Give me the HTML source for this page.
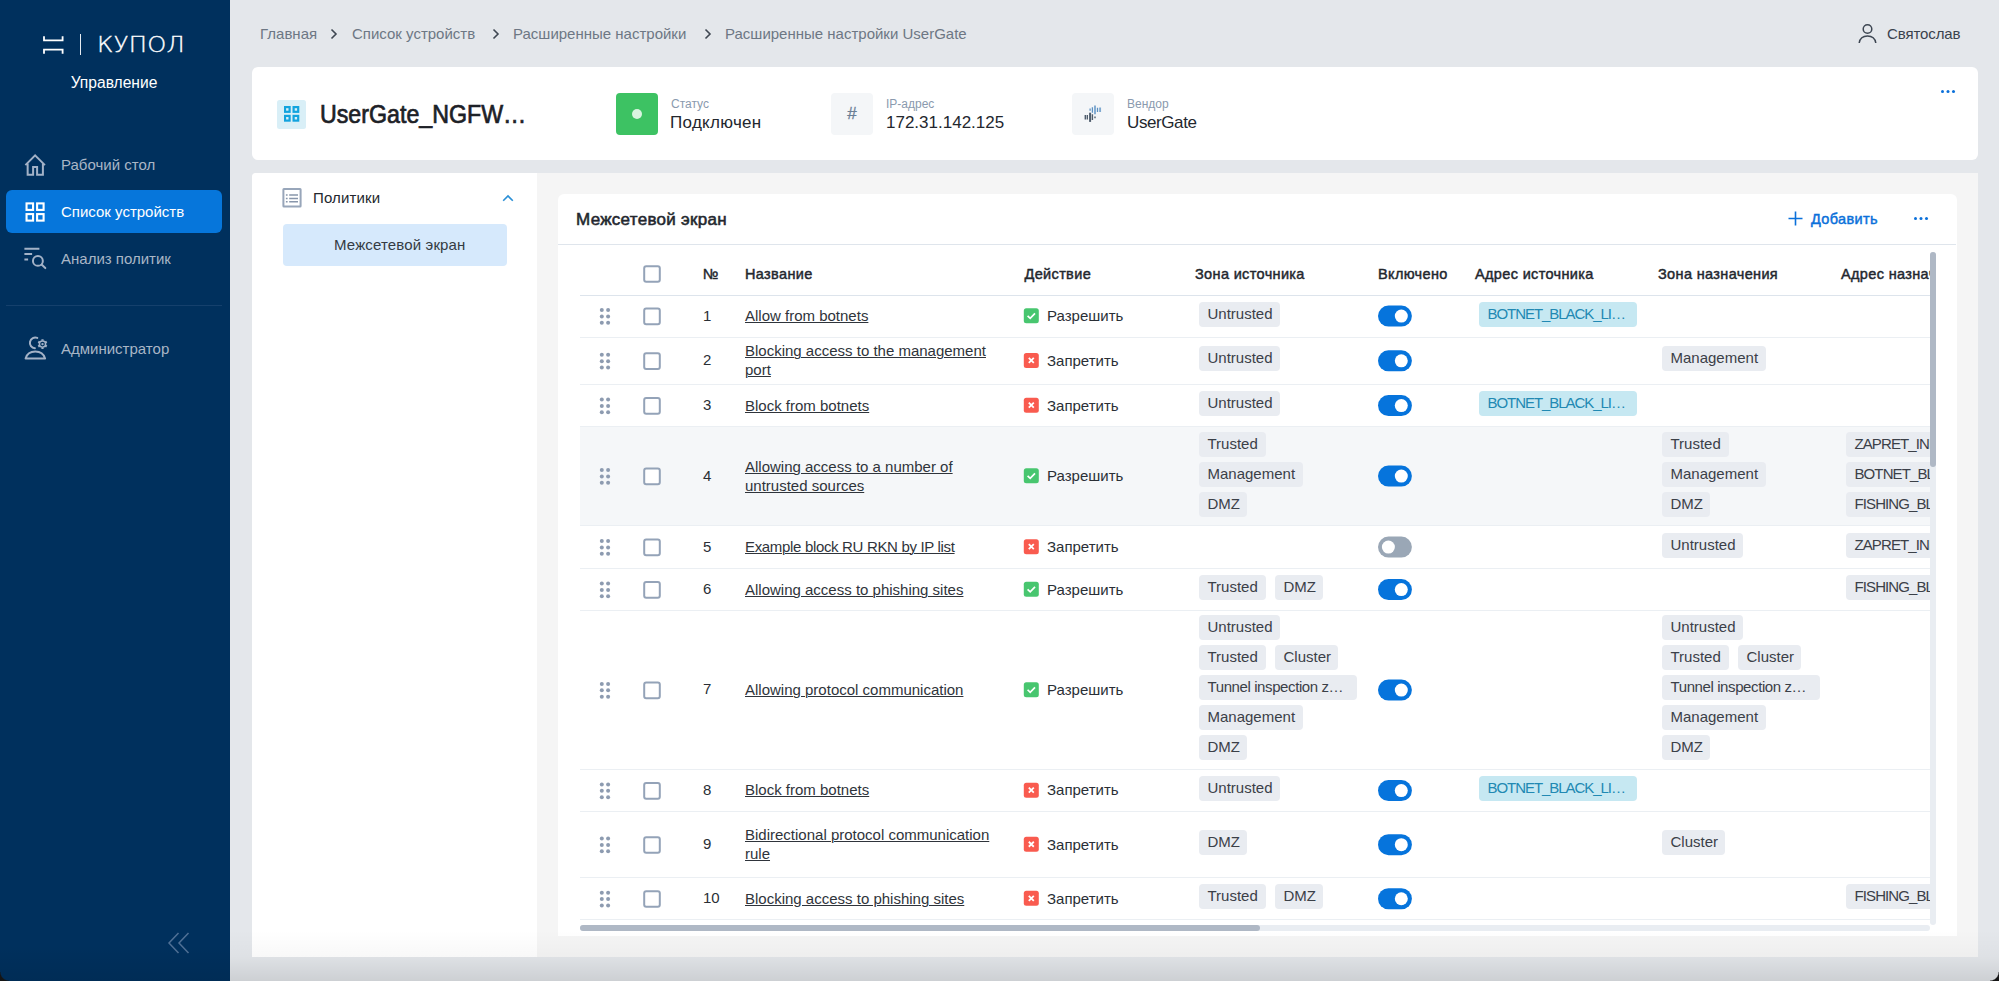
<!DOCTYPE html>
<html lang="ru">
<head>
<meta charset="utf-8">
<title>Купол — Расширенные настройки UserGate</title>
<style>
*{box-sizing:border-box;margin:0;padding:0}
html,body{width:1999px;height:981px;overflow:hidden}
body{position:relative;background:#e4e7eb;font-family:"Liberation Sans",sans-serif;font-size:15px;color:#2a2f36;line-height:1}
.abs{position:absolute}
.med{-webkit-text-stroke:0.35px currentColor}
/* sidebar */
#side{position:absolute;left:0;top:0;width:230px;height:981px;background:#00305d}
#side .nav{position:absolute;left:6px;width:216px;height:43px;border-radius:6px;color:#a9b6c6;font-size:15px}
#side .nav span{position:absolute;left:55px;top:14px;white-space:nowrap}
#side .nav.act{background:#0676db;color:#fff}
/* top */
.bc{position:absolute;top:26px;font-size:15px;color:#6d7784;white-space:nowrap}
.bcs{position:absolute;top:27.5px}
/* cards */
#hcard{position:absolute;left:252px;top:67px;width:1725.5px;height:92.5px;background:#fff;border-radius:6px}
#panel{position:absolute;left:252px;top:173px;width:1725.5px;height:784px;background:#f5f5f5;border-radius:4px 0 0 0}
#lpanel{position:absolute;left:0;top:0;width:285px;height:784px;background:#fff;border-radius:4px 0 0 0}
#tcard{position:absolute;left:558px;top:194px;width:1398.5px;height:742px;background:#fff;border-radius:6px 6px 0 0}
.lbl{position:absolute;font-size:12px;color:#8a9aae;margin-top:0.5px;white-space:nowrap}
.val{position:absolute;font-size:17px;color:#23272e;white-space:nowrap}
/* table */
.th{position:absolute;top:266.5px;font-size:14.5px;font-weight:400;-webkit-text-stroke:0.45px #23272e;letter-spacing:0.35px;color:#23272e;white-space:nowrap}
.row{position:absolute;left:580px;width:1350px;border-top:1px solid #e8ecf1}
.num{position:absolute;left:703px;font-size:15px;white-space:nowrap}
.nm{position:absolute;left:745px;font-size:15px;line-height:19px;text-decoration:underline;text-decoration-thickness:1px;text-underline-offset:1px;color:#2f343b;white-space:nowrap}
.actt{position:absolute;left:1047px;font-size:15px;white-space:nowrap}
.chip{position:absolute;height:25px;border-radius:4px;background:#e9ecf1;color:#3b4048;font-size:15px;line-height:24.5px;padding:0 8.5px;white-space:nowrap;overflow:hidden}
.chip.b{background:#c6e8f2;color:#2189b3}
</style>
</head>
<body>
<!--side--><div id="side">
<svg class="abs" style="left:43px;top:36px" width="21" height="18" viewBox="0 0 21 18" fill="none" stroke="#fff" stroke-width="1.800"><path d="M1 0.200v4.200h18.600V0.200M1 17.800v-4.200h18.600v4.200"/></svg>
<div class="abs" style="left:80px;top:34px;width:1.300px;height:21px;background:#e6ebf1"></div>
<div class="abs" id="logo" style="left:96.5px;top:31px;font-family:'DejaVu Sans Light','DejaVu Sans','Liberation Sans',sans-serif;font-weight:200;font-size:22px;line-height:28px;color:#fff;white-space:nowrap;letter-spacing:0.300px;transform:scaleX(1.10);transform-origin:0 0;-webkit-text-stroke:0.350px #fff">КУПОЛ</div>
<div class="abs" id="logo2" style="left:0;width:228px;top:73px;text-align:center;font-size:15.600px;line-height:20px;color:#fff;white-space:nowrap">Управление</div>
<div class="nav" style="top:143px"><span>Рабочий стол</span></div>
<svg class="abs" style="left:20px;top:150px" width="30" height="30" viewBox="0 0 30 30" fill="none" stroke="#a3b2c7" stroke-width="2"><path d="M5.400 15.100L15.100 5.400l9.800 9.700"/><path d="M7.650 13.500v11.200h5.450V17h4v7.700h5.800V13.500"/></svg>
<div class="nav act" style="top:190px"><span>Список устройств</span></div>
<svg class="abs" style="left:20px;top:197px" width="30" height="30" viewBox="0 0 30 30" fill="none" stroke="#fff" stroke-width="2.100"><rect x="6.550" y="6.400" width="6.500" height="6.500"/><rect x="17.100" y="6.400" width="6.500" height="6.500"/><rect x="6.550" y="17.100" width="6.500" height="6.500"/><rect x="17.100" y="17.100" width="6.500" height="6.500"/></svg>
<div class="nav" style="top:237px"><span>Анализ политик</span></div>
<svg class="abs" style="left:20px;top:243px" width="30" height="30" viewBox="0 0 30 30" fill="none" stroke="#a3b2c7" stroke-width="2"><path d="M4.400 5.800h15M4.400 11.100h7.700M4.400 16.400h3.700"/><circle cx="17.900" cy="17.900" r="4.950"/><path d="M21.600 21.600l3.700 3.500" stroke-linecap="round"/></svg>
<div class="abs" style="left:6px;top:305px;width:216px;height:1px;background:#15406c"></div>
<div class="nav" style="top:327px"><span>Администратор</span></div>
<svg class="abs" style="left:20px;top:334px" width="30" height="30" viewBox="0 0 30 30" fill="none" stroke="#a3b2c7" stroke-width="2"><path d="M17.300 3.900A5.400 5.400 0 1 0 14.900 14.300" stroke-linecap="round"/><path d="M5.600 24.600C7 19.600 10.800 17.600 15.300 17.600s8.300 2 9.800 7z" stroke-linejoin="round"/><circle cx="22.500" cy="10.100" r="3.100" stroke-width="1.500"/><circle cx="22.500" cy="10.100" r="1.200" fill="#a3b2c7" stroke="none"/><path d="M22.500 5.200v1.600M22.500 13.400v1.600M18.260 7.650l1.380.8M25.360 11.750l1.380.8M18.260 12.550l1.380-.8M25.360 8.450l1.380-.8" stroke-width="2.200"/></svg>
<svg class="abs" style="left:167px;top:932px" width="24" height="22" viewBox="0 0 24 22" fill="none" stroke="#4f7095" stroke-width="1.500"><path d="M11.500 1L2 11l9.500 10M21.500 1L12 11l9.500 10"/></svg>
</div>
<!--/side-->
<!--top--><div id="top">
<div class="bc" style="left:260px">Главная</div><svg class="bcs" style="left:330px" width="8" height="12" viewBox="0 0 8 12" fill="none" stroke="#3f4752" stroke-width="1.6"><path d="M1.5 1.5L6 6l-4.500 4.500"/></svg>
<div class="bc" style="left:352px">Список устройств</div><svg class="bcs" style="left:492px" width="8" height="12" viewBox="0 0 8 12" fill="none" stroke="#3f4752" stroke-width="1.6"><path d="M1.5 1.5L6 6l-4.500 4.500"/></svg>
<div class="bc" style="left:513px">Расширенные настройки</div><svg class="bcs" style="left:704px" width="8" height="12" viewBox="0 0 8 12" fill="none" stroke="#3f4752" stroke-width="1.6"><path d="M1.5 1.5L6 6l-4.500 4.500"/></svg>
<div class="bc" style="left:725px">Расширенные настройки UserGate</div>
<svg class="abs" style="left:1858px;top:23px" width="19" height="21" viewBox="0 0 19 21" fill="none" stroke="#3d4652" stroke-width="1.5"><circle cx="9.500" cy="6" r="4.300"/><path d="M1.200 20c.8-5 4-7 8.300-7s7.500 2 8.300 7"/></svg>
<div class="abs" style="left:1887px;top:26px;font-size:15px;color:#3a424d;white-space:nowrap;letter-spacing:-0.1px">Святослав</div>
</div><!--/top-->
<!--hcard--><div id="hcard">
<div class="abs" style="left:25px;top:32.5px;width:29px;height:29px;border-radius:2.5px;background:#d9eff7"></div>
<svg class="abs" style="left:32px;top:39px" width="17" height="17" viewBox="0 0 17 17" fill="none" stroke="#12a3de" stroke-width="2.200"><rect x="1" y="1.100" width="4.600" height="4.700"/><rect x="9.600" y="1.100" width="4.600" height="4.700"/><rect x="1" y="9.900" width="4.600" height="4.700"/><rect x="9.600" y="9.900" width="4.600" height="4.700"/></svg>
<div class="abs" id="ttl" style="left:68px;top:32px;font-size:25px;line-height:30px;font-weight:400;-webkit-text-stroke:0.7px #1d2127;color:#1d2127;white-space:nowrap;transform:scaleX(0.928);transform-origin:0 0">UserGate_NGFW…</div>
<div class="abs" style="left:364px;top:26px;width:42px;height:42px;border-radius:4px;background:#3dc263"></div>
<div class="abs" style="left:380px;top:42px;width:10px;height:10px;border-radius:50%;background:#d9f4e0"></div>
<div class="lbl" style="left:419px;top:30px">Статус</div>
<div class="val" style="left:418px;top:47px;letter-spacing:0.3px">Подключен</div>
<div class="abs" style="left:579px;top:26px;width:42px;height:42px;border-radius:4px;background:#f4f6f8"></div>
<div class="abs" style="left:579px;top:38px;width:42px;text-align:center;font-size:17px;color:#6b7f96;-webkit-text-stroke:0.3px #6b7f96">#</div>
<div class="lbl" style="left:634px;top:30px">IP-адрес</div>
<div class="val" style="left:634px;top:47px">172.31.142.125</div>
<div class="abs" style="left:820px;top:26px;width:42px;height:42px;border-radius:4px;background:#f4f6f8"></div>
<svg class="abs" style="left:826px;top:33px" width="30" height="30" viewBox="0 0 30 30" fill="none"><path d="M12.100 8.600v2.100M14.400 7.200v5.500M19.500 7.800v4.100" stroke="#5d92c3" stroke-width="1.300"/><path d="M17 5.400v8.800M22.100 7.600v4.500" stroke="#7fa9d0" stroke-width="1.900"/><path d="M7.300 15.100v4.300M9.300 15.100v4.300M14.400 14.200v5.800M17 16.400v1.800" stroke="#4f5d6c" stroke-width="1.400"/><path d="M12.100 12.700v9.200" stroke="#4f5d6c" stroke-width="2"/></svg>
<div class="lbl" style="left:875px;top:30px">Вендор</div>
<div class="val" style="left:875px;top:47px;letter-spacing:-0.4px">UserGate</div>
<div class="abs" style="left:1689px;top:22.5px;width:3.400px;height:3.400px;border-radius:50%;background:#0a70da;box-shadow:5.500px 0 0 #0a70da,11px 0 0 #0a70da"></div>
</div><!--/hcard-->
<!--panel--><div id="panel"><div id="lpanel">
<svg class="abs" style="left:30px;top:15px" width="21" height="21" viewBox="0 0 21 21" fill="none" stroke="#98a6ba"><rect x="1.400" y="1.100" width="17.200" height="17.500" rx="0.500" stroke-width="2"/><path d="M7.200 6.900h8.800M7.200 10.400h8.800M7.200 13.800h8.800M3.900 6.900h1.700M3.900 10.400h1.700M3.900 13.800h1.700" stroke="#8896ab" stroke-width="1.500"/></svg>
<div class="abs" style="left:61px;top:17px;font-size:15px;color:#23272e;white-space:nowrap;letter-spacing:0.15px">Политики</div>
<svg class="abs" style="left:250px;top:21px" width="12" height="8" viewBox="0 0 12 8" fill="none" stroke="#2a8fd6" stroke-width="1.600"><path d="M1.200 6.800L6 2l4.800 4.800"/></svg>
<div class="abs" style="left:31px;top:51px;width:224px;height:42px;border-radius:4px;background:#d6e9fc"></div>
<div class="abs" style="left:82px;top:64px;font-size:15px;color:#343b43;white-space:nowrap;letter-spacing:0.15px">Межсетевой экран</div>
</div></div><!--/panel-->
<!--tcard--><div id="tcard">
<div class="abs" style="left:18px;top:15.5px;font-size:17px;line-height:20px;font-weight:400;-webkit-text-stroke:0.55px #23272e;letter-spacing:0.28px;color:#23272e;white-space:nowrap">Межсетевой экран</div>
<svg class="abs" style="left:1230px;top:17px" width="15" height="15" viewBox="0 0 15 15" stroke="#0a70da" stroke-width="1.600"><path d="M7.500 0.500v14M0.500 7.500h14"/></svg>
<div class="abs" style="left:1253px;top:18px;font-size:14.5px;font-weight:400;-webkit-text-stroke:0.45px #0a70da;letter-spacing:0.35px;color:#0a70da;white-space:nowrap">Добавить</div>
<div class="abs" style="left:1356px;top:23px;width:3.400px;height:3.400px;border-radius:50%;background:#0a70da;box-shadow:5.500px 0 0 #0a70da,11px 0 0 #0a70da"></div>
<div class="abs" style="left:0;top:50px;width:1398px;height:1px;background:#dfe5ec"></div>
</div><!--/tcard-->
<!--tbl--><div id="tbl">
<div class="abs" style="left:580px;top:252px;width:1350px;height:673px;overflow:hidden"><div class="abs" style="left:-580px;top:-252px;width:1999px;height:981px">
<svg class="abs" style="left:643px;top:265px" width="19" height="19" viewBox="0 0 19 19"><g transform="translate(0.20 0.20)"><rect x="1" y="1" width="15.600" height="15.600" rx="2" fill="#fff" stroke="#94a3b8" stroke-width="2"/></g></svg>
<div class="th" style="left:703px">№</div>
<div class="th" style="left:745px">Название</div>
<div class="th" style="left:1024.5px">Действие</div>
<div class="th" style="left:1195px">Зона источника</div>
<div class="th" style="left:1378px">Включено</div>
<div class="th" style="left:1475px">Адрес источника</div>
<div class="th" style="left:1658px">Зона назначения</div>
<div class="th" style="left:1841px">Адрес назначения</div>
<div class="abs" style="left:580px;top:294.5px;width:1350px;height:1.5px;background:#dde4ec"></div>
<div class="abs" style="left:580px;top:336.5px;width:1350px;height:1px;background:#ebeff3"></div>
<svg class="abs" style="left:599px;top:307px" width="13" height="19" viewBox="0 0 13 19" fill="#8d9bb0"><g transform="translate(0.00 0.40)"><circle cx="2.800" cy="2.600" r="2"/><circle cx="9.100" cy="2.600" r="2"/><circle cx="2.800" cy="9" r="2"/><circle cx="9.100" cy="9" r="2"/><circle cx="2.800" cy="15.400" r="2"/><circle cx="9.100" cy="15.400" r="2"/></g></svg>
<svg class="abs" style="left:643px;top:307px" width="19" height="19" viewBox="0 0 19 19"><g transform="translate(0.20 0.60)"><rect x="1" y="1" width="15.600" height="15.600" rx="2" fill="#fff" stroke="#94a3b8" stroke-width="2"/></g></svg>
<div class="num" style="top:307.5px">1</div>
<div class="nm" style="top:306px;letter-spacing:0px">Allow from botnets</div>
<svg class="abs" style="left:1023px;top:308px" width="16" height="16" viewBox="0 0 16 16"><g transform="translate(0.80 0.20)"><rect width="15" height="15" rx="2.500" fill="#48c66f"/><path d="M3.800 7.600l2.600 2.600 4.800-5" fill="none" stroke="#fff" stroke-width="1.700"/></g></svg>
<div class="actt" style="top:308px">Разрешить</div>
<div class="chip" style="left:1199px;top:301.5px;width:81px">Untrusted</div>
<svg class="abs" style="left:1378px;top:305px" width="35" height="22" viewBox="0 0 35 22"><g transform="translate(0.00 0.60)"><rect width="33.900" height="21" rx="10.500" fill="#0674dc"/><circle cx="23.300" cy="10.500" r="6.500" fill="#fff"/></g></svg>
<div class="chip b" style="left:1479px;top:301.5px;width:158px;letter-spacing:-1.05px">BOTNET_BLACK_LI…</div>


<div class="abs" style="left:580px;top:384px;width:1350px;height:1px;background:#ebeff3"></div>
<svg class="abs" style="left:599px;top:352px" width="13" height="19" viewBox="0 0 13 19" fill="#8d9bb0"><g transform="translate(0.00 0.15)"><circle cx="2.800" cy="2.600" r="2"/><circle cx="9.100" cy="2.600" r="2"/><circle cx="2.800" cy="9" r="2"/><circle cx="9.100" cy="9" r="2"/><circle cx="2.800" cy="15.400" r="2"/><circle cx="9.100" cy="15.400" r="2"/></g></svg>
<svg class="abs" style="left:643px;top:352px" width="19" height="19" viewBox="0 0 19 19"><g transform="translate(0.20 0.35)"><rect x="1" y="1" width="15.600" height="15.600" rx="2" fill="#fff" stroke="#94a3b8" stroke-width="2"/></g></svg>
<div class="num" style="top:352.25px">2</div>
<div class="nm" style="top:341.25px;letter-spacing:0px">Blocking access to the management<br>port</div>
<svg class="abs" style="left:1023px;top:352px" width="16" height="16" viewBox="0 0 16 16"><g transform="translate(0.80 0.95)"><rect width="15" height="15" rx="2.500" fill="#f95b4f"/><path d="M5 5l5 5M10 5l-5 5" fill="none" stroke="#fff" stroke-width="1.800"/></g></svg>
<div class="actt" style="top:352.75px">Запретить</div>
<div class="chip" style="left:1199px;top:346.25px;width:81px">Untrusted</div>
<svg class="abs" style="left:1378px;top:350px" width="35" height="22" viewBox="0 0 35 22"><g transform="translate(0.00 0.35)"><rect width="33.900" height="21" rx="10.500" fill="#0674dc"/><circle cx="23.300" cy="10.500" r="6.500" fill="#fff"/></g></svg>

<div class="chip" style="left:1662px;top:346.25px;width:104px">Management</div>

<div class="abs" style="left:580px;top:426px;width:1350px;height:1px;background:#ebeff3"></div>
<svg class="abs" style="left:599px;top:396px" width="13" height="19" viewBox="0 0 13 19" fill="#8d9bb0"><g transform="translate(0.00 0.90)"><circle cx="2.800" cy="2.600" r="2"/><circle cx="9.100" cy="2.600" r="2"/><circle cx="2.800" cy="9" r="2"/><circle cx="9.100" cy="9" r="2"/><circle cx="2.800" cy="15.400" r="2"/><circle cx="9.100" cy="15.400" r="2"/></g></svg>
<svg class="abs" style="left:643px;top:397px" width="19" height="19" viewBox="0 0 19 19"><g transform="translate(0.20 0.10)"><rect x="1" y="1" width="15.600" height="15.600" rx="2" fill="#fff" stroke="#94a3b8" stroke-width="2"/></g></svg>
<div class="num" style="top:397px">3</div>
<div class="nm" style="top:395.5px;letter-spacing:0px">Block from botnets</div>
<svg class="abs" style="left:1023px;top:397px" width="16" height="16" viewBox="0 0 16 16"><g transform="translate(0.80 0.70)"><rect width="15" height="15" rx="2.500" fill="#f95b4f"/><path d="M5 5l5 5M10 5l-5 5" fill="none" stroke="#fff" stroke-width="1.800"/></g></svg>
<div class="actt" style="top:397.5px">Запретить</div>
<div class="chip" style="left:1199px;top:391px;width:81px">Untrusted</div>
<svg class="abs" style="left:1378px;top:395px" width="35" height="22" viewBox="0 0 35 22"><g transform="translate(0.00 0.10)"><rect width="33.900" height="21" rx="10.500" fill="#0674dc"/><circle cx="23.300" cy="10.500" r="6.500" fill="#fff"/></g></svg>
<div class="chip b" style="left:1479px;top:391px;width:158px;letter-spacing:-1.05px">BOTNET_BLACK_LI…</div>


<div class="abs" style="left:580px;top:427px;width:1350px;height:99px;background:#f5f7f9"></div>
<div class="abs" style="left:580px;top:525px;width:1350px;height:1px;background:#ebeff3"></div>
<svg class="abs" style="left:599px;top:467px" width="13" height="19" viewBox="0 0 13 19" fill="#8d9bb0"><g transform="translate(0.00 0.40)"><circle cx="2.800" cy="2.600" r="2"/><circle cx="9.100" cy="2.600" r="2"/><circle cx="2.800" cy="9" r="2"/><circle cx="9.100" cy="9" r="2"/><circle cx="2.800" cy="15.400" r="2"/><circle cx="9.100" cy="15.400" r="2"/></g></svg>
<svg class="abs" style="left:643px;top:467px" width="19" height="19" viewBox="0 0 19 19"><g transform="translate(0.20 0.60)"><rect x="1" y="1" width="15.600" height="15.600" rx="2" fill="#fff" stroke="#94a3b8" stroke-width="2"/></g></svg>
<div class="num" style="top:467.5px">4</div>
<div class="nm" style="top:456.5px;letter-spacing:0px">Allowing access to a number of<br>untrusted sources</div>
<svg class="abs" style="left:1023px;top:468px" width="16" height="16" viewBox="0 0 16 16"><g transform="translate(0.80 0.20)"><rect width="15" height="15" rx="2.500" fill="#48c66f"/><path d="M3.800 7.600l2.600 2.600 4.800-5" fill="none" stroke="#fff" stroke-width="1.700"/></g></svg>
<div class="actt" style="top:468px">Разрешить</div>
<div class="chip" style="left:1199px;top:431.5px;width:67px">Trusted</div><div class="chip" style="left:1199px;top:461.5px;width:104px">Management</div><div class="chip" style="left:1199px;top:491.5px;width:48px">DMZ</div>
<svg class="abs" style="left:1378px;top:465px" width="35" height="22" viewBox="0 0 35 22"><g transform="translate(0.00 0.60)"><rect width="33.900" height="21" rx="10.500" fill="#0674dc"/><circle cx="23.300" cy="10.500" r="6.500" fill="#fff"/></g></svg>

<div class="chip" style="left:1662px;top:431.5px;width:67px">Trusted</div><div class="chip" style="left:1662px;top:461.5px;width:104px">Management</div><div class="chip" style="left:1662px;top:491.5px;width:48px">DMZ</div>
<div class="chip" style="left:1846px;top:431.5px;width:120px;letter-spacing:-0.9px;text-overflow:clip">ZAPRET_INFO_BLACK…</div><div class="chip" style="left:1846px;top:461.5px;width:120px;letter-spacing:-0.9px;text-overflow:clip">BOTNET_BLACK_LIST</div><div class="chip" style="left:1846px;top:491.5px;width:120px;letter-spacing:-0.9px;text-overflow:clip">FISHING_BLACK_LIST</div>
<div class="abs" style="left:580px;top:568px;width:1350px;height:1px;background:#ebeff3"></div>
<svg class="abs" style="left:599px;top:538px" width="13" height="19" viewBox="0 0 13 19" fill="#8d9bb0"><g transform="translate(0.00 0.40)"><circle cx="2.800" cy="2.600" r="2"/><circle cx="9.100" cy="2.600" r="2"/><circle cx="2.800" cy="9" r="2"/><circle cx="9.100" cy="9" r="2"/><circle cx="2.800" cy="15.400" r="2"/><circle cx="9.100" cy="15.400" r="2"/></g></svg>
<svg class="abs" style="left:643px;top:538px" width="19" height="19" viewBox="0 0 19 19"><g transform="translate(0.20 0.60)"><rect x="1" y="1" width="15.600" height="15.600" rx="2" fill="#fff" stroke="#94a3b8" stroke-width="2"/></g></svg>
<div class="num" style="top:538.5px">5</div>
<div class="nm" style="top:537px;letter-spacing:-0.33px">Example block RU RKN by IP list</div>
<svg class="abs" style="left:1023px;top:539px" width="16" height="16" viewBox="0 0 16 16"><g transform="translate(0.80 0.20)"><rect width="15" height="15" rx="2.500" fill="#f95b4f"/><path d="M5 5l5 5M10 5l-5 5" fill="none" stroke="#fff" stroke-width="1.800"/></g></svg>
<div class="actt" style="top:539px">Запретить</div>

<svg class="abs" style="left:1378px;top:536px" width="35" height="22" viewBox="0 0 35 22"><g transform="translate(0.00 0.60)"><rect width="33.900" height="21" rx="10.500" fill="#9aa7b6"/><circle cx="10.400" cy="10.500" r="6.500" fill="#fff"/></g></svg>

<div class="chip" style="left:1662px;top:532.5px;width:81px">Untrusted</div>
<div class="chip" style="left:1846px;top:532.5px;width:120px;letter-spacing:-0.9px;text-overflow:clip">ZAPRET_INFO_BLACK…</div>
<div class="abs" style="left:580px;top:610px;width:1350px;height:1px;background:#ebeff3"></div>
<svg class="abs" style="left:599px;top:580px" width="13" height="19" viewBox="0 0 13 19" fill="#8d9bb0"><g transform="translate(0.00 0.90)"><circle cx="2.800" cy="2.600" r="2"/><circle cx="9.100" cy="2.600" r="2"/><circle cx="2.800" cy="9" r="2"/><circle cx="9.100" cy="9" r="2"/><circle cx="2.800" cy="15.400" r="2"/><circle cx="9.100" cy="15.400" r="2"/></g></svg>
<svg class="abs" style="left:643px;top:581px" width="19" height="19" viewBox="0 0 19 19"><g transform="translate(0.20 0.10)"><rect x="1" y="1" width="15.600" height="15.600" rx="2" fill="#fff" stroke="#94a3b8" stroke-width="2"/></g></svg>
<div class="num" style="top:581px">6</div>
<div class="nm" style="top:579.5px;letter-spacing:0px">Allowing access to phishing sites</div>
<svg class="abs" style="left:1023px;top:581px" width="16" height="16" viewBox="0 0 16 16"><g transform="translate(0.80 0.70)"><rect width="15" height="15" rx="2.500" fill="#48c66f"/><path d="M3.800 7.600l2.600 2.600 4.800-5" fill="none" stroke="#fff" stroke-width="1.700"/></g></svg>
<div class="actt" style="top:581.5px">Разрешить</div>
<div class="chip" style="left:1199px;top:575px;width:67px">Trusted</div><div class="chip" style="left:1275px;top:575px;width:48px">DMZ</div>
<svg class="abs" style="left:1378px;top:579px" width="35" height="22" viewBox="0 0 35 22"><g transform="translate(0.00 0.10)"><rect width="33.900" height="21" rx="10.500" fill="#0674dc"/><circle cx="23.300" cy="10.500" r="6.500" fill="#fff"/></g></svg>


<div class="chip" style="left:1846px;top:575px;width:120px;letter-spacing:-0.9px;text-overflow:clip">FISHING_BLACK_LIST</div>
<div class="abs" style="left:580px;top:768.9px;width:1350px;height:1px;background:#ebeff3"></div>
<svg class="abs" style="left:599px;top:681px" width="13" height="19" viewBox="0 0 13 19" fill="#8d9bb0"><g transform="translate(0.00 0.35)"><circle cx="2.800" cy="2.600" r="2"/><circle cx="9.100" cy="2.600" r="2"/><circle cx="2.800" cy="9" r="2"/><circle cx="9.100" cy="9" r="2"/><circle cx="2.800" cy="15.400" r="2"/><circle cx="9.100" cy="15.400" r="2"/></g></svg>
<svg class="abs" style="left:643px;top:681px" width="19" height="19" viewBox="0 0 19 19"><g transform="translate(0.20 0.55)"><rect x="1" y="1" width="15.600" height="15.600" rx="2" fill="#fff" stroke="#94a3b8" stroke-width="2"/></g></svg>
<div class="num" style="top:681.45px">7</div>
<div class="nm" style="top:679.95px;letter-spacing:0px">Allowing protocol communication</div>
<svg class="abs" style="left:1023px;top:682px" width="16" height="16" viewBox="0 0 16 16"><g transform="translate(0.80 0.15)"><rect width="15" height="15" rx="2.500" fill="#48c66f"/><path d="M3.800 7.600l2.600 2.600 4.800-5" fill="none" stroke="#fff" stroke-width="1.700"/></g></svg>
<div class="actt" style="top:681.95px">Разрешить</div>
<div class="chip" style="left:1199px;top:615.45px;width:81px">Untrusted</div><div class="chip" style="left:1199px;top:645.45px;width:67px">Trusted</div><div class="chip" style="left:1275px;top:645.45px;width:63px">Cluster</div><div class="chip" style="left:1199px;top:675.45px;width:157.7px;letter-spacing:-0.4px">Tunnel inspection z…</div><div class="chip" style="left:1199px;top:705.45px;width:104px">Management</div><div class="chip" style="left:1199px;top:735.45px;width:48px">DMZ</div>
<svg class="abs" style="left:1378px;top:679px" width="35" height="22" viewBox="0 0 35 22"><g transform="translate(0.00 0.55)"><rect width="33.900" height="21" rx="10.500" fill="#0674dc"/><circle cx="23.300" cy="10.500" r="6.500" fill="#fff"/></g></svg>

<div class="chip" style="left:1662px;top:615.45px;width:81px">Untrusted</div><div class="chip" style="left:1662px;top:645.45px;width:67px">Trusted</div><div class="chip" style="left:1738px;top:645.45px;width:63px">Cluster</div><div class="chip" style="left:1662px;top:675.45px;width:157.7px;letter-spacing:-0.4px">Tunnel inspection z…</div><div class="chip" style="left:1662px;top:705.45px;width:104px">Management</div><div class="chip" style="left:1662px;top:735.45px;width:48px">DMZ</div>

<div class="abs" style="left:580px;top:811px;width:1350px;height:1px;background:#ebeff3"></div>
<svg class="abs" style="left:599px;top:781px" width="13" height="19" viewBox="0 0 13 19" fill="#8d9bb0"><g transform="translate(0.00 0.85)"><circle cx="2.800" cy="2.600" r="2"/><circle cx="9.100" cy="2.600" r="2"/><circle cx="2.800" cy="9" r="2"/><circle cx="9.100" cy="9" r="2"/><circle cx="2.800" cy="15.400" r="2"/><circle cx="9.100" cy="15.400" r="2"/></g></svg>
<svg class="abs" style="left:643px;top:782px" width="19" height="19" viewBox="0 0 19 19"><g transform="translate(0.20 0.05)"><rect x="1" y="1" width="15.600" height="15.600" rx="2" fill="#fff" stroke="#94a3b8" stroke-width="2"/></g></svg>
<div class="num" style="top:781.95px">8</div>
<div class="nm" style="top:780.45px;letter-spacing:0px">Block from botnets</div>
<svg class="abs" style="left:1023px;top:782px" width="16" height="16" viewBox="0 0 16 16"><g transform="translate(0.80 0.65)"><rect width="15" height="15" rx="2.500" fill="#f95b4f"/><path d="M5 5l5 5M10 5l-5 5" fill="none" stroke="#fff" stroke-width="1.800"/></g></svg>
<div class="actt" style="top:782.45px">Запретить</div>
<div class="chip" style="left:1199px;top:775.95px;width:81px">Untrusted</div>
<svg class="abs" style="left:1378px;top:780px" width="35" height="22" viewBox="0 0 35 22"><g transform="translate(0.00 0.05)"><rect width="33.900" height="21" rx="10.500" fill="#0674dc"/><circle cx="23.300" cy="10.500" r="6.500" fill="#fff"/></g></svg>
<div class="chip b" style="left:1479px;top:775.95px;width:158px;letter-spacing:-1.05px">BOTNET_BLACK_LI…</div>


<div class="abs" style="left:580px;top:877.1px;width:1350px;height:1px;background:#ebeff3"></div>
<svg class="abs" style="left:599px;top:835px" width="13" height="19" viewBox="0 0 13 19" fill="#8d9bb0"><g transform="translate(0.00 0.95)"><circle cx="2.800" cy="2.600" r="2"/><circle cx="9.100" cy="2.600" r="2"/><circle cx="2.800" cy="9" r="2"/><circle cx="9.100" cy="9" r="2"/><circle cx="2.800" cy="15.400" r="2"/><circle cx="9.100" cy="15.400" r="2"/></g></svg>
<svg class="abs" style="left:643px;top:836px" width="19" height="19" viewBox="0 0 19 19"><g transform="translate(0.20 0.15)"><rect x="1" y="1" width="15.600" height="15.600" rx="2" fill="#fff" stroke="#94a3b8" stroke-width="2"/></g></svg>
<div class="num" style="top:836.05px">9</div>
<div class="nm" style="top:825.05px;letter-spacing:0px">Bidirectional protocol communication<br>rule</div>
<svg class="abs" style="left:1023px;top:836px" width="16" height="16" viewBox="0 0 16 16"><g transform="translate(0.80 0.75)"><rect width="15" height="15" rx="2.500" fill="#f95b4f"/><path d="M5 5l5 5M10 5l-5 5" fill="none" stroke="#fff" stroke-width="1.800"/></g></svg>
<div class="actt" style="top:836.55px">Запретить</div>
<div class="chip" style="left:1199px;top:830.05px;width:48px">DMZ</div>
<svg class="abs" style="left:1378px;top:834px" width="35" height="22" viewBox="0 0 35 22"><g transform="translate(0.00 0.15)"><rect width="33.900" height="21" rx="10.500" fill="#0674dc"/><circle cx="23.300" cy="10.500" r="6.500" fill="#fff"/></g></svg>

<div class="chip" style="left:1662px;top:830.05px;width:63px">Cluster</div>

<div class="abs" style="left:580px;top:919.2px;width:1350px;height:1px;background:#ebeff3"></div>
<svg class="abs" style="left:599px;top:890px" width="13" height="19" viewBox="0 0 13 19" fill="#8d9bb0"><g transform="translate(0.00 0.05)"><circle cx="2.800" cy="2.600" r="2"/><circle cx="9.100" cy="2.600" r="2"/><circle cx="2.800" cy="9" r="2"/><circle cx="9.100" cy="9" r="2"/><circle cx="2.800" cy="15.400" r="2"/><circle cx="9.100" cy="15.400" r="2"/></g></svg>
<svg class="abs" style="left:643px;top:890px" width="19" height="19" viewBox="0 0 19 19"><g transform="translate(0.20 0.25)"><rect x="1" y="1" width="15.600" height="15.600" rx="2" fill="#fff" stroke="#94a3b8" stroke-width="2"/></g></svg>
<div class="num" style="top:890.15px">10</div>
<div class="nm" style="top:888.65px;letter-spacing:0px">Blocking access to phishing sites</div>
<svg class="abs" style="left:1023px;top:890px" width="16" height="16" viewBox="0 0 16 16"><g transform="translate(0.80 0.85)"><rect width="15" height="15" rx="2.500" fill="#f95b4f"/><path d="M5 5l5 5M10 5l-5 5" fill="none" stroke="#fff" stroke-width="1.800"/></g></svg>
<div class="actt" style="top:890.65px">Запретить</div>
<div class="chip" style="left:1199px;top:884.15px;width:67px">Trusted</div><div class="chip" style="left:1275px;top:884.15px;width:48px">DMZ</div>
<svg class="abs" style="left:1378px;top:888px" width="35" height="22" viewBox="0 0 35 22"><g transform="translate(0.00 0.25)"><rect width="33.900" height="21" rx="10.500" fill="#0674dc"/><circle cx="23.300" cy="10.500" r="6.500" fill="#fff"/></g></svg>


<div class="chip" style="left:1846px;top:884.15px;width:120px;letter-spacing:-0.9px;text-overflow:clip">FISHING_BLACK_LIST</div>
</div></div>
<div class="abs" style="left:1930px;top:252px;width:6px;height:673px;border-radius:3px;background:#e9edf2"></div>
<div class="abs" style="left:1930px;top:252px;width:6px;height:215px;border-radius:3px;background:#afb8c5"></div>
<div class="abs" style="left:580px;top:925px;width:1350px;height:6px;border-radius:3px;background:#e9edf2"></div>
<div class="abs" style="left:580px;top:925px;width:680px;height:6px;border-radius:3px;background:#afb8c5"></div>
</div><!--/tbl-->
<!--shadow--><div id="shadow">
<div class="abs" style="left:230px;top:930px;width:1769px;height:51px;background:linear-gradient(to bottom,rgba(0,0,0,0) 0%,rgba(0,0,0,0.028) 53%,rgba(0,0,0,0.100) 100%)"></div>
<div class="abs" style="left:0;top:945px;width:230px;height:36px;background:linear-gradient(to bottom,rgba(0,0,0,0),rgba(0,0,0,0.080))"></div>
<div class="abs" style="left:1990px;top:972px;width:9px;height:9px;background:radial-gradient(circle at 0 0,rgba(17,17,17,0) 8px,#151515 9.200px)"></div>
<div class="abs" style="left:0;top:972px;width:9px;height:9px;background:radial-gradient(circle at 100% 0,rgba(17,17,17,0) 8px,#151515 9.200px)"></div>
</div><!--/shadow-->
</body>
</html>
